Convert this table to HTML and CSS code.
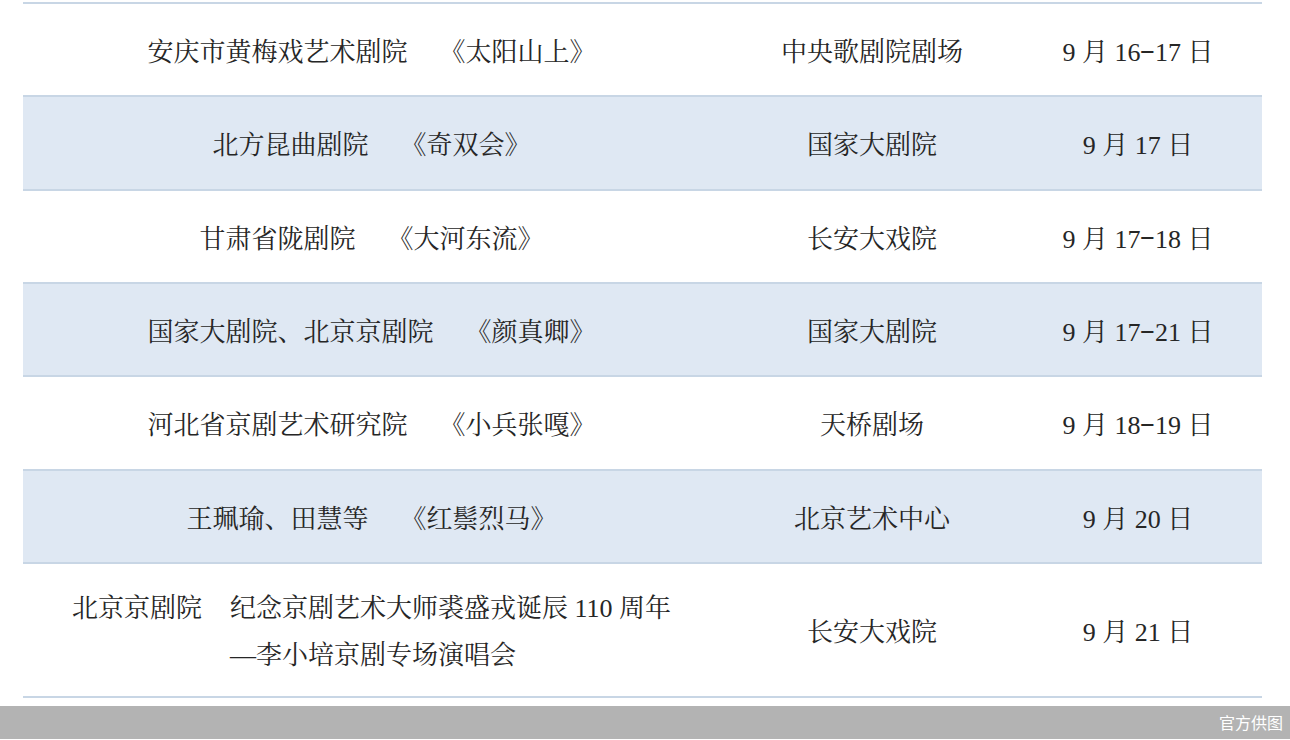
FILE: index.html
```html
<!DOCTYPE html>
<html lang="zh">
<head>
<meta charset="utf-8">
<link rel="stylesheet" href="styles.css">
</head>
<body>
<div class="table">
  <div class="row">
    <div class="cell"><span>安庆市黄梅戏艺术剧院</span><span class="gap"></span><span>《太阳山上》</span></div>
    <div class="cell">中央歌剧院剧场</div>
    <div class="cell date">9 月 16<span class="dash">-</span>17 日</div>
  </div>
  <div class="row alt">
    <div class="cell"><span>北方昆曲剧院</span><span class="gap"></span><span>《奇双会》</span></div>
    <div class="cell">国家大剧院</div>
    <div class="cell date">9 月 17 日</div>
  </div>
  <div class="row">
    <div class="cell"><span>甘肃省陇剧院</span><span class="gap"></span><span>《大河东流》</span></div>
    <div class="cell">长安大戏院</div>
    <div class="cell date">9 月 17<span class="dash">-</span>18 日</div>
  </div>
  <div class="row alt">
    <div class="cell"><span>国家大剧院、北京京剧院</span><span class="gap"></span><span>《颜真卿》</span></div>
    <div class="cell">国家大剧院</div>
    <div class="cell date">9 月 17<span class="dash">-</span>21 日</div>
  </div>
  <div class="row">
    <div class="cell"><span>河北省京剧艺术研究院</span><span class="gap"></span><span>《小兵张嘎》</span></div>
    <div class="cell">天桥剧场</div>
    <div class="cell date">9 月 18<span class="dash">-</span>19 日</div>
  </div>
  <div class="row alt">
    <div class="cell"><span>王珮瑜、田慧等</span><span class="gap"></span><span>《红鬃烈马》</span></div>
    <div class="cell">北京艺术中心</div>
    <div class="cell date">9 月 20 日</div>
  </div>
  <div class="row tall">
    <div class="cell">
      <div class="pair"><span>北京京剧院</span><span class="gap2"></span><span class="multi">纪念京剧艺术大师裘盛戎诞辰 110 周年<br>—李小培京剧专场演唱会</span></div>
    </div>
    <div class="cell">长安大戏院</div>
    <div class="cell date">9 月 21 日</div>
  </div>
</div>
<div class="footer">官方供图</div>
</body>
</html>
```

FILE: styles.css
```css
html, body {
  margin: 0;
  padding: 0;
  background: #ffffff;
}
body {
  width: 1290px;
  height: 740px;
  overflow: hidden;
  font-family: "Liberation Serif", "Noto Serif CJK SC", "Noto Sans CJK SC", serif;
  color: #262626;
}
.table {
  margin: 2px 0 0 23px;
  width: 1239px;
  border-top: 2px solid #c8d6e5;
}
.row {
  display: grid;
  grid-template-columns: 697px 304px 238px;
  height: 91.33px;
  border-bottom: 2px solid #c8d6e5;
  font-size: 26px;
}
.row.alt {
  background: #dfe8f3;
}
.row.tall {
  height: 132px;
}
.cell {
  display: flex;
  align-items: center;
  justify-content: center;
  white-space: nowrap;
}
.cell.date {
  padding-right: 10px;
}
.dash {
  display: inline-block;
  transform: scaleX(1.8);
  margin: 0 3px;
}
.gap {
  width: 32px;
}
.pair {
  display: flex;
  align-items: baseline;
  padding-top: 4px;
}
.gap2 {
  width: 28px;
}
.multi {
  text-align: left;
  line-height: 47px;
}
.footer {
  margin-top: 8px;
  height: 33px;
  background: #b3b3b3;
  color: #ffffff;
  font-family: "Noto Sans CJK SC", "Noto Sans", sans-serif;
  font-size: 16px;
  display: flex;
  align-items: center;
  justify-content: flex-end;
  padding-right: 7px;
}
```
